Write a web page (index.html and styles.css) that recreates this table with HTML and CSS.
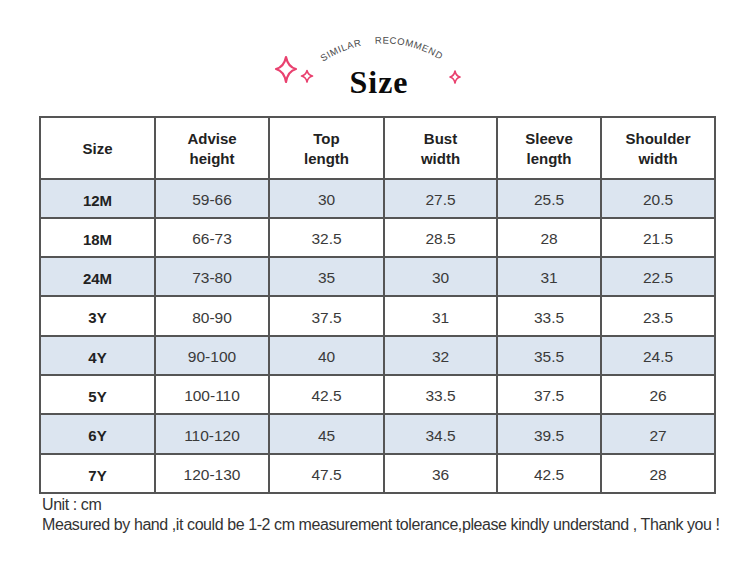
FILE: index.html
```html
<!DOCTYPE html>
<html>
<head>
<meta charset="utf-8">
<link rel="stylesheet" href="styles.css">
</head>
<body>
<header class="head">
  <svg class="head-art" width="750" height="116" viewBox="0 0 750 116" xmlns="http://www.w3.org/2000/svg">
    <defs>
      <path id="arc" d="M 316,67 A 108,108 0 0,1 448,65"/>
    </defs>
    <text class="arc-text"><textPath href="#arc" startOffset="50%" text-anchor="middle">SIMILAR&#160;&#160;&#160;&#160;RECOMMEND</textPath></text>
    <g class="spark">
      <path d="M286,57 Q288,67 296,69 Q288,71 286,82 Q284,71 276,69 Q284,67 286,57 Z"/>
      <path d="M307,70.5 Q308,75 312.5,76 Q308,77 307,82 Q306,77 301.5,76 Q306,75 307,70.5 Z" class="thin"/>
      <path d="M455,71 Q456,76 460,77 Q456,78 455,83 Q454,78 450,77 Q454,76 455,71 Z" class="thin"/>
    </g>
    <text class="title" x="379" y="93" text-anchor="middle">Size</text>
  </svg>
</header>

<div class="chart">
  <div class="row hdr">
    <div class="cell">Size</div>
    <div class="cell">Advise<br>height</div>
    <div class="cell">Top<br>length</div>
    <div class="cell">Bust<br>width</div>
    <div class="cell">Sleeve<br>length</div>
    <div class="cell">Shoulder<br>width</div>
  </div>
  <div class="row alt">
    <div class="cell sz">12M</div><div class="cell">59-66</div><div class="cell">30</div><div class="cell">27.5</div><div class="cell">25.5</div><div class="cell">20.5</div>
  </div>
  <div class="row">
    <div class="cell sz">18M</div><div class="cell">66-73</div><div class="cell">32.5</div><div class="cell">28.5</div><div class="cell">28</div><div class="cell">21.5</div>
  </div>
  <div class="row alt">
    <div class="cell sz">24M</div><div class="cell">73-80</div><div class="cell">35</div><div class="cell">30</div><div class="cell">31</div><div class="cell">22.5</div>
  </div>
  <div class="row">
    <div class="cell sz">3Y</div><div class="cell">80-90</div><div class="cell">37.5</div><div class="cell">31</div><div class="cell">33.5</div><div class="cell">23.5</div>
  </div>
  <div class="row alt">
    <div class="cell sz">4Y</div><div class="cell">90-100</div><div class="cell">40</div><div class="cell">32</div><div class="cell">35.5</div><div class="cell">24.5</div>
  </div>
  <div class="row">
    <div class="cell sz">5Y</div><div class="cell">100-110</div><div class="cell">42.5</div><div class="cell">33.5</div><div class="cell">37.5</div><div class="cell">26</div>
  </div>
  <div class="row alt">
    <div class="cell sz">6Y</div><div class="cell">110-120</div><div class="cell">45</div><div class="cell">34.5</div><div class="cell">39.5</div><div class="cell">27</div>
  </div>
  <div class="row">
    <div class="cell sz">7Y</div><div class="cell">120-130</div><div class="cell">47.5</div><div class="cell">36</div><div class="cell">42.5</div><div class="cell">28</div>
  </div>
</div>

<div class="notes">
  <p>Unit : cm</p>
  <p>Measured by hand ,it could be 1-2 cm measurement tolerance,please kindly understand , Thank you !</p>
</div>
</body>
</html>
```

FILE: styles.css
```css
html, body {
  margin: 0;
  padding: 0;
  background: #ffffff;
}

body {
  width: 750px;
  height: 572px;
  overflow: hidden;
  font-family: "Liberation Sans", Arial, sans-serif;
}

.head {
  height: 116px;
}

.head-art {
  display: block;
}

.arc-text {
  font-family: "Liberation Sans", Arial, sans-serif;
  font-size: 9.5px;
  letter-spacing: 0.6px;
  fill: #4a4a4a;
}

.spark path {
  fill: none;
  stroke: #e9416f;
  stroke-width: 2.2;
  stroke-linejoin: round;
}

.spark path.thin {
  stroke-width: 1.6;
}

.title {
  font-family: "Liberation Serif", "Times New Roman", serif;
  font-weight: 700;
  font-size: 32px;
  letter-spacing: 1px;
  fill: #0b0b0b;
}

.chart {
  margin-left: 39px;
  width: 677px;
  box-sizing: border-box;
  display: grid;
  grid-template-columns: 113px 112px 113px 111px 102px 112px;
  grid-template-rows: 60px 37px 37px 37px 38px 37px 37px 38px 37px;
  gap: 2px;
  padding: 2px;
  background: #555555;
}

.row {
  display: contents;
}

.cell {
  background: #ffffff;
  display: flex;
  align-items: center;
  justify-content: center;
  text-align: center;
  font-size: 15.5px;
  color: #3a3a3a;
  padding-top: 3px;
  box-sizing: border-box;
}

.row.alt .cell {
  background: #dce5f0;
}

.row.hdr .cell {
  font-weight: 700;
  font-size: 15px;
  line-height: 20px;
  color: #222222;
  padding-top: 2px;
}

.cell.sz {
  font-weight: 700;
  font-size: 15px;
  color: #222222;
}

.notes {
  padding-left: 42px;
  padding-top: 1px;
  color: #333333;
  font-size: 16px;
  line-height: 20px;
  letter-spacing: -0.42px;
}

.notes p {
  margin: 0;
}
```
